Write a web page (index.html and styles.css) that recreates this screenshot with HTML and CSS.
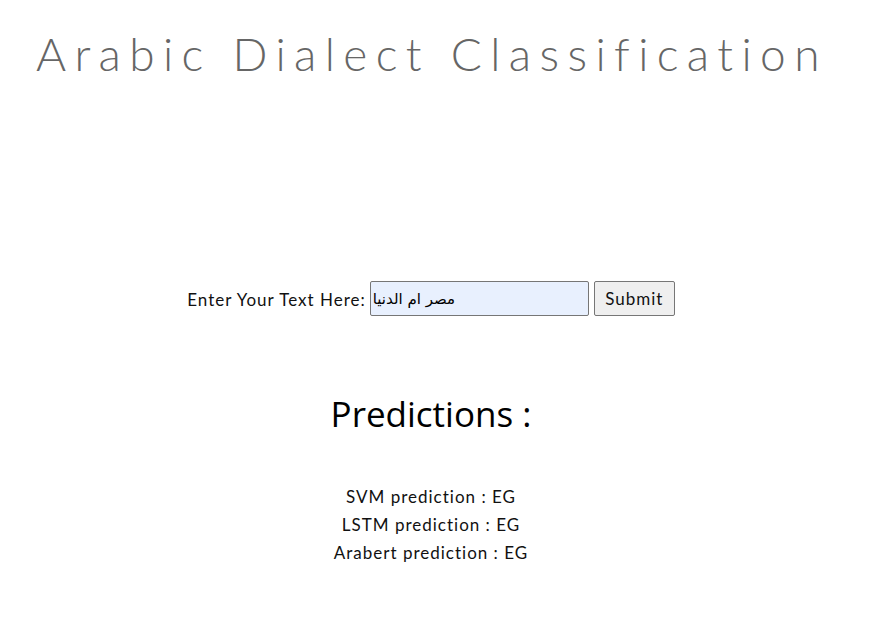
FILE: index.html
```html
<!DOCTYPE html>
<html lang="en">
<head>
<meta charset="utf-8">
<title>Arabic Dialect Classification</title>
<link rel="stylesheet" href="styles.css">
</head>
<body>
<header class="header">
  <h1 class="title">Arabic Dialect Classification</h1>
</header>
<main class="main">
  <form class="form">
    <label class="label" for="txt">Enter Your Text Here:</label>
    <input class="input" id="txt" type="text" value="مصر ام الدنيا">
    <button class="btn" type="button">Submit</button>
  </form>
  <h2 class="pred-title">Predictions :</h2>
  <div class="preds">
    <p class="pred">SVM prediction : EG</p>
    <p class="pred">LSTM prediction : EG</p>
    <p class="pred">Arabert prediction : EG</p>
  </div>
</main>
</body>
</html>
```
FILE: styles.css
```css
html, body {
  margin: 0;
  padding: 0;
  background: #fff;
}
body {
  font-family: "Lato", "Open Sans", sans-serif;
  color: #111;
}
.header {
  padding: 26px 0 0 36px;
}
.title {
  margin: 0;
  font-family: "Lato", sans-serif;
  font-weight: 300;
  font-size: 46px;
  line-height: 56px;
  letter-spacing: 8.4px;
  color: #666;
}
.main {
  display: flex;
  flex-direction: column;
  align-items: center;
  padding-top: 199px;
  padding-right: 33px;
}
.form {
  display: flex;
  align-items: center;
  gap: 4px;
}
.label {
  font-size: 17px;
  letter-spacing: 1px;
  color: #111;
  padding-top: 2px;
}
.input {
  box-sizing: border-box;
  width: 219px;
  height: 35px;
  border: 1px solid #767676;
  border-radius: 2px;
  background: #e8f0fe;
  font-family: "DejaVu Sans", "Noto Sans", sans-serif;
  font-size: 15px;
  padding: 0 2px;
  color: #000;
  margin-right: 1px;
}
.btn {
  box-sizing: border-box;
  height: 35px;
  width: 81px;
  border: 1px solid #767676;
  border-radius: 2px;
  background: #efefef;
  font-family: "Lato", sans-serif;
  font-size: 17px;
  letter-spacing: 1px;
  color: #111;
  padding: 0;
}
.pred-title {
  margin: 74px 0 0 0;
  font-family: "Open Sans", sans-serif;
  font-weight: 400;
  font-size: 35px;
  line-height: 48px;
  color: #000;
}
.preds {
  margin-top: 45px;
  display: flex;
  flex-direction: column;
  align-items: center;
}
.pred {
  margin: 0;
  font-size: 17px;
  letter-spacing: 1px;
  line-height: 28px;
  color: #111;
}
```
